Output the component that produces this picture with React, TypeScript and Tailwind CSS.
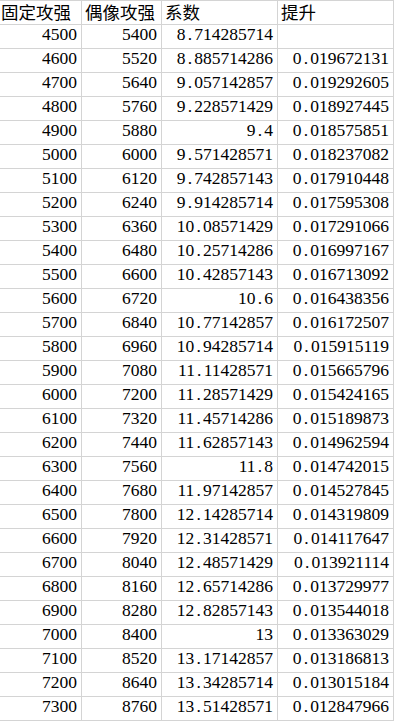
const rows: [string, string, string, string][] = [
  ["4500", "5400", "8.714285714", ""],
  ["4600", "5520", "8.885714286", "0.019672131"],
  ["4700", "5640", "9.057142857", "0.019292605"],
  ["4800", "5760", "9.228571429", "0.018927445"],
  ["4900", "5880", "9.4", "0.018575851"],
  ["5000", "6000", "9.571428571", "0.018237082"],
  ["5100", "6120", "9.742857143", "0.017910448"],
  ["5200", "6240", "9.914285714", "0.017595308"],
  ["5300", "6360", "10.08571429", "0.017291066"],
  ["5400", "6480", "10.25714286", "0.016997167"],
  ["5500", "6600", "10.42857143", "0.016713092"],
  ["5600", "6720", "10.6", "0.016438356"],
  ["5700", "6840", "10.77142857", "0.016172507"],
  ["5800", "6960", "10.94285714", "0.015915119"],
  ["5900", "7080", "11.11428571", "0.015665796"],
  ["6000", "7200", "11.28571429", "0.015424165"],
  ["6100", "7320", "11.45714286", "0.015189873"],
  ["6200", "7440", "11.62857143", "0.014962594"],
  ["6300", "7560", "11.8", "0.014742015"],
  ["6400", "7680", "11.97142857", "0.014527845"],
  ["6500", "7800", "12.14285714", "0.014319809"],
  ["6600", "7920", "12.31428571", "0.014117647"],
  ["6700", "8040", "12.48571429", "0.013921114"],
  ["6800", "8160", "12.65714286", "0.013729977"],
  ["6900", "8280", "12.82857143", "0.013544018"],
  ["7000", "8400", "13", "0.013363029"],
  ["7100", "8520", "13.17142857", "0.013186813"],
  ["7200", "8640", "13.34285714", "0.013015184"],
  ["7300", "8760", "13.51428571", "0.012847966"],
]

const headers = ["固定攻强", "偶像攻强", "系数", "提升"]
const widths = ["w-[82px]", "w-[80px]", "w-[116px]", "w-[116px]"]

// SimSun-style number: every char incl. the dot takes one half-width cell
function Num({ value }: { value: string }) {
  const [a, b] = value.split(".")
  return (
    <span>
      {a}
      {b !== undefined && (
        <>
          <span className="inline-block w-[8.75px] text-center">.</span>
          {b}
        </>
      )}
    </span>
  )
}

export default function App() {
  return (
    <div className="w-[398px] h-[722px] bg-white overflow-hidden text-black">
      <div className="w-[394px] border-t border-[#d4d4d4]">
        <div className="flex h-[24px] border-b border-[#d4d4d4]">
          {headers.map((h, i) => (
            <div
              key={h}
              className={`${widths[i]} shrink-0 border-r border-[#d4d4d4] ${i === 0 ? "pl-[1px]" : "pl-[3px]"} pt-[1px] text-[17.5px] leading-[20px] whitespace-nowrap [font-family:'Noto_Sans_CJK_SC',sans-serif]`}
            >
              {h}
            </div>
          ))}
        </div>
        {rows.map((r) => (
          <div key={r[0]} className="flex h-[24px] border-b border-[#d4d4d4]">
            {r.map((c, i) => (
              <div
                key={i}
                className={`${widths[i]} shrink-0 border-r border-[#d4d4d4] pr-[4px] text-right text-[17.5px] leading-[18px] whitespace-nowrap [font-family:'Liberation_Serif',serif]`}
              >
                <Num value={c} />
              </div>
            ))}
          </div>
        ))}
      </div>
    </div>
  )
}
